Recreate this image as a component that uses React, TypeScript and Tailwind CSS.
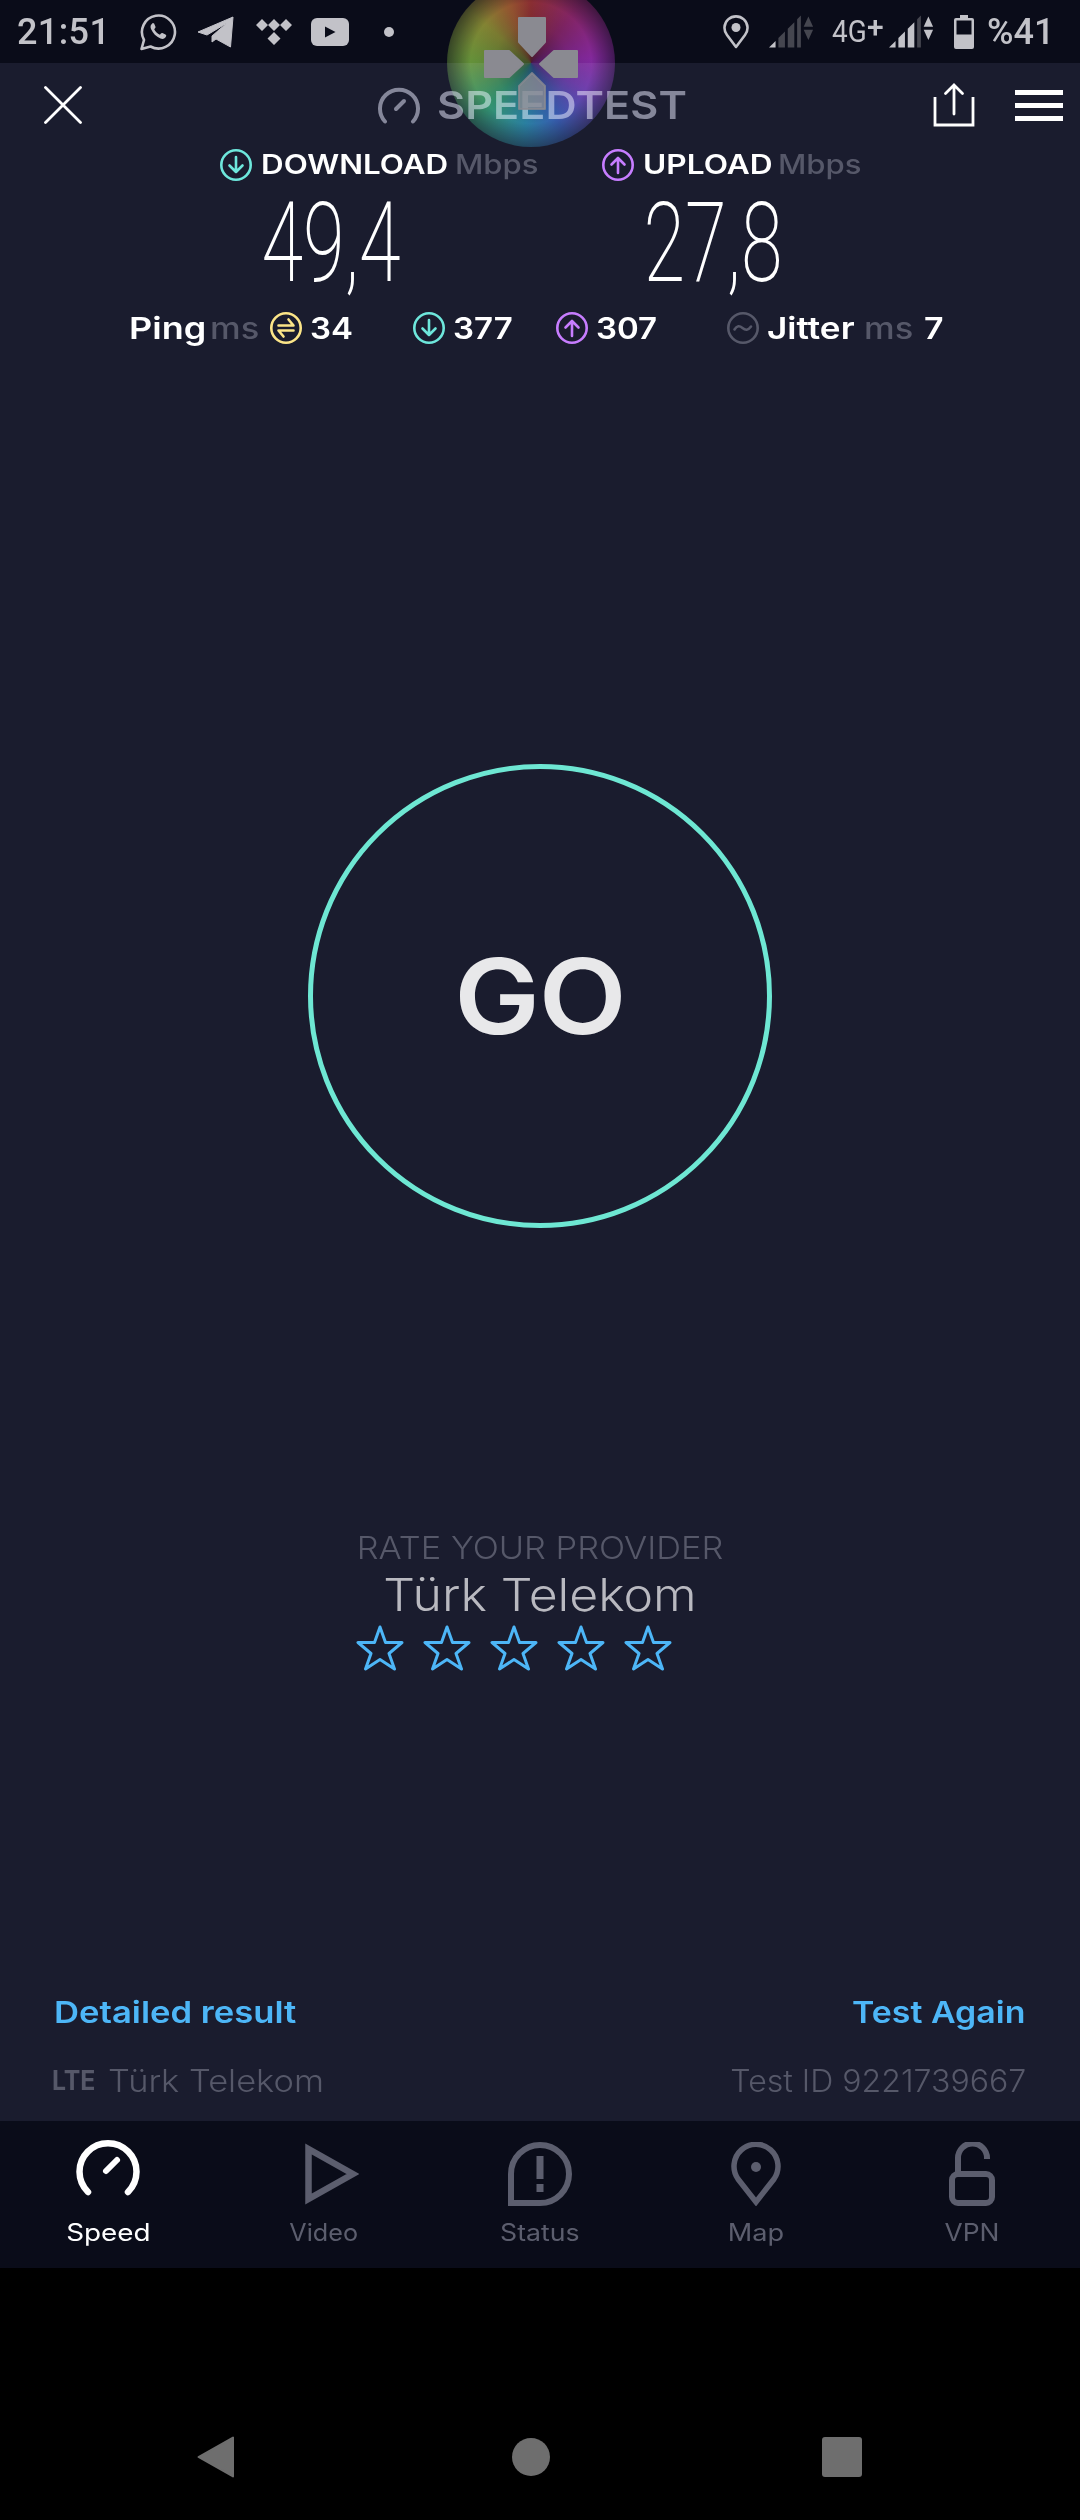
import React from "react";

const dim = "#565869";

function CircleIcon({ color, kind }: { color: string; kind: "down" | "up" | "ping" | "jitter" }) {
  return (
    <svg width="34" height="34" viewBox="0 0 34 34" fill="none" stroke={color} strokeWidth="2.6" strokeLinecap="round" strokeLinejoin="round" className="shrink-0">
      <circle cx="17" cy="17" r="14.7" />
      {kind === "down" && <path d="M17 9v15M10.5 17.5 17 24l6.5-6.5" />}
      {kind === "up" && <path d="M17 25V10M10.5 16.5 17 10l6.5 6.5" />}
      {kind === "ping" && <path d="M9.500 14.500h15l-5-6M24.500 19.500h-15l5 6" />}
      {kind === "jitter" && <path d="M8.5 18.5c2.5-4 5-4 8-1.5s5.500 2.500 8.500-1.500" />}
    </svg>
  );
}

function Signal({ lit, bright }: { lit: number; bright: boolean }) {
  const bars = [
    "M0 34 7 27V34Z",
    "M10 24 17 17V34H10Z",
    "M20 14 27 7V34H20Z",
    "M30 4 34 0V34H30Z",
  ];
  const c = "#c2c2c8";
  const d = "#45464f";
  return (
    <svg width="45" height="33" viewBox="0 0 48 34">
      {bars.map((p, i) => (
        <path key={i} d={p} fill={i < lit ? c : d} />
      ))}
      <path d="M42 1 47 12H37Z" fill={bright ? c : d} />
      <path d="M37 15H47L42 26Z" fill={bright ? c : d} />
    </svg>
  );
}

function StatusBar() {
  const c = "#c2c2c8";
  return (
    <div className="h-[63px] shrink-0 bg-[#0a0c19] flex items-center text-[#c2c2c8] font-['Roboto',sans-serif]">
      <span className="ml-[17px] w-[90px] text-[36px] leading-none font-medium tracking-[0.4px] whitespace-nowrap">21:51</span>
      <svg className="ml-[32px]" width="38" height="38" viewBox="0 0 38 38" fill="none">
        <path d="M2.500 36 5 27A16.500 16.500 0 1 1 11.500 33.500Z" stroke={c} strokeWidth="2.600" strokeLinejoin="round" />
        <path d="M13.500 10.500c-2 1-2.500 3-1.500 5.500 2 4.500 5 7.500 9.500 9.500 2.500 1 4.500 0 5.500-2 .5-1 .2-1.500-.5-2l-3-1.500c-.7-.3-1.200 0-1.600.5l-1 1.300c-2.500-1-4.500-3-5.700-5.500l1-1.200c.4-.5.5-1 .2-1.500l-1.300-3c-.4-.7-1.200-.8-1.800-.6z" fill={c} />
      </svg>
      <svg className="ml-[20px]" width="38" height="34" viewBox="0 0 38 34">
        <path d="M1 17 36 2 33.500 32 19 24 15 27 15 21 30 8 10 20Z" fill={c} stroke={c} strokeWidth="1" strokeLinejoin="round" />
      </svg>
      <svg className="ml-[20px]" width="38" height="28" viewBox="0 0 38 28" fill={c}>
        <path d="M7 1 13 7 7 13 1 7ZM19 1 25 7 19 13 13 7ZM31 1 37 7 31 13 25 7ZM19 14 25.500 20.500 19 27 12.500 20.500Z" />
      </svg>
      <svg className="ml-[18px]" width="38" height="28" viewBox="0 0 38 28">
        <rect width="38" height="28" rx="6" fill={c} />
        <path d="M14 8.500 24.500 14 14 19.500Z" fill="#0a0c19" />
      </svg>
      <span className="ml-[35px] w-[10px] h-[10px] rounded-full bg-[#c2c2c8]" />
      <svg className="ml-[329px]" width="26" height="34" viewBox="0 0 26 34" fill="none">
        <path d="M13 32 4 20A11.500 11.500 0 1 1 22 20Z" stroke={c} strokeWidth="2.600" strokeLinejoin="round" />
        <circle cx="13" cy="12.500" r="4.500" fill={c} />
      </svg>
      <span className="ml-[20px] flex"><Signal lit={1} bright={false} /></span>
      <span className="ml-[18px] w-[34px] text-[31px] leading-none font-normal scale-x-[0.9] origin-left whitespace-nowrap">4G</span>
      <span className="ml-[1px] w-[15px] text-[30px] leading-none font-medium -mt-[10px]">+</span>
      <span className="ml-[7px] flex"><Signal lit={3} bright={true} /></span>
      <svg className="ml-[20px]" width="20" height="34" viewBox="0 0 20 34">
        <path d="M6 0H14V3H18Q20 3 20 5V32Q20 34 18 34H2Q0 34 0 32V5Q0 3 2 3H6Z" fill={c} />
        <rect x="2.500" y="5.500" width="15" height="14" fill="#0a0c19" />
      </svg>
      <span className="ml-[13px] text-[36px] leading-none font-medium whitespace-nowrap">%41</span>
    </div>
  );
}

function Header() {
  return (
    <div className="h-[84px] shrink-0 flex items-center">
      <svg className="ml-[44px]" width="38" height="38" viewBox="0 0 38 38" stroke="#ffffff" strokeWidth="2.800" strokeLinecap="round">
        <path d="M1.500 1.500 36.500 36.500M36.500 1.500 1.500 36.500" />
      </svg>
      <svg className="ml-[296px]" width="42" height="38" viewBox="0 0 42 38" fill="none" stroke="#85879a" strokeWidth="4" strokeLinecap="round">
        <path d="M7 35.500A19 19 0 1 1 35 35.500" />
        <path d="M18 23 26 15" />
      </svg>
      <span className="ml-[17px] w-[250px] text-[38.500px] leading-none font-semibold text-[#85879a] tracking-[0.1px] whitespace-nowrap scale-x-[1.12] origin-left">SPEEDTEST</span>
      <svg className="ml-[246px]" width="42" height="44" viewBox="0 0 42 44" fill="none" stroke="#ffffff" strokeWidth="2.800" strokeLinecap="round">
        <path d="M2 14V42H40V14" strokeLinecap="butt" />
        <path d="M21 31V3M12.500 10.500 21 2l8.500 8.500" />
      </svg>
      <div className="ml-[40px] w-[48px] flex flex-col gap-[8px]">
        <div className="h-[5px] bg-white" />
        <div className="h-[5px] bg-white" />
        <div className="h-[5px] bg-white" />
      </div>
    </div>
  );
}

function Labels() {
  return (
    <div className="h-[36px] shrink-0 flex items-center text-[27.500px] leading-none font-semibold whitespace-nowrap">
      <span className="ml-[219px] flex"><CircleIcon color="#6ee7dc" kind="down" /></span>
      <span className="ml-[8px] w-[194px] text-white scale-x-[1.14] origin-left">DOWNLOAD</span>
      <span className="w-[82px] font-medium scale-x-[1.13] origin-left" style={{ color: dim }}>Mbps</span>
      <span className="ml-[64px] flex"><CircleIcon color="#c77dff" kind="up" /></span>
      <span className="ml-[8px] w-[135px] text-white scale-x-[1.15] origin-left">UPLOAD</span>
      <span className="w-[82px] font-medium scale-x-[1.13] origin-left" style={{ color: dim }}>Mbps</span>
    </div>
  );
}

function Numbers() {
  const cls = "w-[300px] text-center text-white text-[112px] leading-none font-extralight font-['Roboto',sans-serif] scale-x-[0.675] whitespace-nowrap";
  return (
    <div className="h-[120px] shrink-0 flex items-center">
      <div className={"ml-[181px] " + cls}>49,4</div>
      <div className={"ml-[82px] " + cls}>27,8</div>
    </div>
  );
}

function PingRow() {
  const num = "ml-[7px] scale-x-[1.1] origin-left ";
  return (
    <div className="h-[50px] shrink-0 flex items-center text-[30px] leading-none font-semibold text-white whitespace-nowrap">
      <span className="ml-[129px] w-[81px] scale-x-[1.2] origin-left">Ping</span>
      <span className="w-[59px] font-medium scale-x-[1.15] origin-left" style={{ color: dim }}>ms</span>
      <CircleIcon color="#fce588" kind="ping" />
      <span className={num + "w-[102px]"}>34</span>
      <CircleIcon color="#6ee7dc" kind="down" />
      <span className={num + "w-[102px]"}>377</span>
      <CircleIcon color="#c77dff" kind="up" />
      <span className={num + "w-[130px]"}>307</span>
      <CircleIcon color="#565869" kind="jitter" />
      <span className="ml-[7px] w-[97px] scale-x-[1.17] origin-left">Jitter</span>
      <span className="w-[60px] font-medium scale-x-[1.15] origin-left" style={{ color: dim }}>ms</span>
      <span className="scale-x-[1.13] origin-left">7</span>
    </div>
  );
}

function Star() {
  return (
    <svg width="48" height="46" viewBox="0 0 48 46" fill="none" stroke="#4db6f7" strokeWidth="3" strokeLinejoin="round">
      <path d="M24 2 29.500 17.500H46L33 28.500 38.500 44 24 34.500 9.500 44 15 28.500 2 17.500H18.500Z" />
    </svg>
  );
}

function Tab({ label, active, stretch, children }: { label: string; active?: boolean; stretch: string; children: React.ReactNode }) {
  return (
    <div className="flex-1 flex flex-col items-center pt-[18px]">
      <div className="h-[70px] flex items-center justify-center">{children}</div>
      <span className={"mt-[12px] text-[24px] leading-none " + stretch + " " + (active ? "text-white" : "text-[#5c5e6e]")}>{label}</span>
    </div>
  );
}

function TabBar() {
  const g = "#5c5e6e";
  return (
    <div className="h-[147px] shrink-0 bg-[#0a0c19] flex px-0">
      <Tab label="Speed" active stretch="scale-x-[1.16]">
        <svg className="mb-[14px]" width="64" height="58" viewBox="0 0 64 58" fill="none" stroke="#ffffff" strokeWidth="6.500" strokeLinecap="round">
          <path d="M12 54A28.500 28.500 0 1 1 52 54" />
          <path d="M30 33 41 22" strokeWidth="6" />
        </svg>
      </Tab>
      <Tab label="Video" stretch="scale-x-[1.05]">
        <svg className="ml-[16px]" width="54" height="62" viewBox="0 0 54 62" fill="none" stroke={g} strokeWidth="6.500">
          <path d="M3.500 6V56L48 31Z" />
        </svg>
      </Tab>
      <Tab label="Status" stretch="scale-x-[1.11]">
        <svg width="64" height="64" viewBox="0 0 64 64" fill="none" stroke={g} strokeWidth="6">
          <path d="M3 61V32A29 29 0 1 1 32 61Z" />
          <path d="M32 14V37" strokeWidth="7" />
          <path d="M32 42V50" strokeWidth="7" />
        </svg>
      </Tab>
      <Tab label="Map" stretch="scale-x-[1.13]">
        <svg width="50" height="64" viewBox="0 0 50 64" fill="none" stroke={g} strokeWidth="5.500">
          <path d="M25 60 7 37A22 22 0 1 1 43 37Z" strokeLinejoin="miter" />
          <circle cx="25" cy="25" r="5" fill={g} stroke="none" />
        </svg>
      </Tab>
      <Tab label="VPN" stretch="scale-x-[1.1]">
        <svg width="46" height="64" viewBox="0 0 46 64" fill="none" stroke={g} strokeWidth="6">
          <rect x="3" y="32" width="40" height="29" rx="6" />
          <path d="M9 32V16A14.500 14.500 0 0 1 38 16V17" />
        </svg>
      </Tab>
    </div>
  );
}

function Bubble() {
  const tile = "#8a8a91";
  return (
    <div className="absolute left-[447px] top-[-21px] w-[168px] h-[168px]">
      <div className="absolute inset-0 rounded-full mix-blend-screen bg-[radial-gradient(circle_closest-side,rgba(0,0,0,0.55)_0%,rgba(0,0,0,0.2)_45%,rgba(0,0,0,0.1)_72%,rgba(0,0,0,0.6)_100%),conic-gradient(#94281f_0deg,#8c1c5c_40deg,#8c20a0_85deg,#6a2cac_115deg,#2450b0_155deg,#147c9c_185deg,#209658_225deg,#689c28_270deg,#8c8c20_310deg,#a0541c_340deg,#94281f_360deg)]" />
      <svg className="absolute inset-0" width="168" height="168" viewBox="0 0 168 168" fill={tile} stroke={tile} strokeWidth="2" strokeLinejoin="round">
        <path d="M72 39H98V63L85 77 72 63Z" />
        <path d="M72 107 85 94 98 107V130H72Z" fillOpacity="0.8" strokeOpacity="0.8" />
        <path d="M38 72H62L76 85 62 98H38Z" />
        <path d="M93 85 107 72H130V98H107Z" />
      </svg>
    </div>
  );
}

export default function App() {
  return (
    <div className="relative w-[1080px] h-[2520px] overflow-hidden bg-black flex flex-col font-['Inter',sans-serif]">
      <StatusBar />
      <div className="h-[2058px] shrink-0 bg-[#1a1c2e] flex flex-col">
        <Header />
        <Labels />
        <Numbers />
        <PingRow />
        <div className="mt-[411px] mx-auto w-[464px] h-[464px] shrink-0 rounded-full border-[5px] border-[#6ee7d3] flex items-center justify-center">
          <span className="text-[#e8e8ea] text-[104px] leading-none font-semibold tracking-[-1px] scale-x-[1.1]">GO</span>
        </div>
        <div className="mt-[300px] h-[40px] shrink-0 text-center text-[31px] leading-[40px] font-light text-[#565869] whitespace-nowrap scale-x-[1.11]">RATE YOUR PROVIDER</div>
        <div className="h-[54px] shrink-0 text-center text-[45px] leading-[54px] font-light text-[#b9b9c0] whitespace-nowrap scale-x-[1.11]">Türk Telekom</div>
        <div className="mt-[3px] flex gap-[19px] ml-[356px]">
          <Star /><Star /><Star /><Star /><Star />
        </div>
        <div className="mt-auto flex justify-between pl-[54px] pr-[55px] h-[40px] items-center text-[30px] leading-none font-semibold text-[#4db6f7] whitespace-nowrap">
          <span className="scale-x-[1.155] origin-left">Detailed result</span>
          <span className="scale-x-[1.13] origin-right">Test Again</span>
        </div>
        <div className="mt-[28px] mb-[21px] h-[40px] flex items-center justify-between pl-[52px] pr-[54px] text-[31px] leading-none text-[#565869] font-light whitespace-nowrap">
          <span className="flex items-center">
            <span className="font-bold text-[27px] scale-x-[0.92] origin-left w-[56px]">LTE</span>
            <span className="scale-x-[1.11] origin-left">Türk Telekom</span>
          </span>
          <span className="scale-x-[1.034] origin-right">Test ID 9221739667</span>
        </div>
      </div>
      <TabBar />
      <div className="flex-1 relative flex items-start">
        <svg className="ml-[197px] mt-[168px]" width="38" height="42" viewBox="0 0 38 42" fill="#6e6e6e" stroke="#6e6e6e" strokeWidth="2" strokeLinejoin="round">
          <path d="M36 1.500V40.500L1.500 21Z" />
        </svg>
        <span className="ml-[277px] mt-[170px] w-[38px] h-[38px] rounded-full bg-[#6e6e6e]" />
        <span className="ml-[272px] mt-[169px] w-[40px] h-[40px] rounded-[3px] bg-[#6e6e6e]" />
      </div>
      <Bubble />
    </div>
  );
}
